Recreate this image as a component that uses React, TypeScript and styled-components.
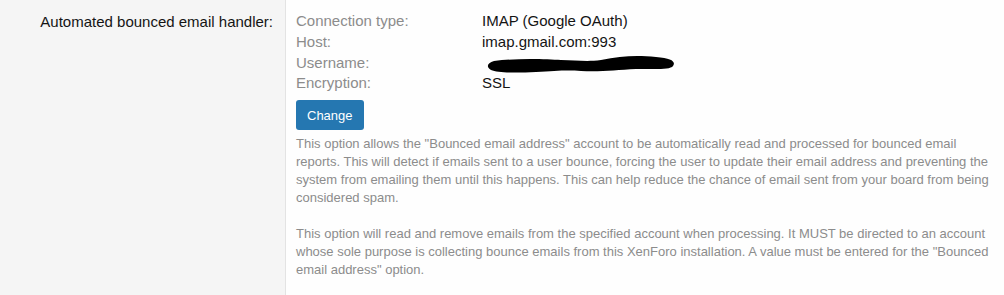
import React from "react";
import styled, { createGlobalStyle } from "styled-components";

const GlobalStyle = createGlobalStyle`
  html, body {
    margin: 0;
    padding: 0;
    background: #fefefe;
  }
  body {
    font-family: "Liberation Sans", Arial, sans-serif;
  }
`;

const details = [
  { label: "Connection type:", value: "IMAP (Google OAuth)" },
  { label: "Host:", value: "imap.gmail.com:993" },
  { label: "Username:", value: "", redacted: true },
  { label: "Encryption:", value: "SSL" },
];

export default function App() {
  return (
    <>
      <GlobalStyle />
      <Row>
        <Term>Automated bounced email handler:</Term>
        <Definition>
          <DetailList>
            {details.map((d) => (
              <React.Fragment key={d.label}>
                <DetailLabel>{d.label}</DetailLabel>
                <DetailValue>
                  {d.redacted ? <Scribble /> : d.value}
                </DetailValue>
              </React.Fragment>
            ))}
          </DetailList>
          <Button>Change</Button>
          <Explain>
            This option allows the "Bounced email address" account to be
            automatically read and processed for bounced email reports. This
            will detect if emails sent to a user bounce, forcing the user to
            update their email address and preventing the system from emailing
            them until this happens. This can help reduce the chance of email
            sent from your board from being considered spam.
            <br />
            <br />
            This option will read and remove emails from the specified account
            when processing. It MUST be directed to an account whose sole
            purpose is collecting bounce emails from this XenForo installation.
            A value must be entered for the "Bounced email address" option.
          </Explain>
        </Definition>
      </Row>
    </>
  );
}

// hand-drawn black marker stroke hiding the username
function Scribble() {
  return (
    <ScribbleSvg viewBox="0 0 190 22" width="190" height="22">
      <path
        d="M8 7 C 30 4, 60 5, 75 6 C 90 6, 100 8, 115 6 C 135 2, 150 1, 170 3 C 186 4, 190 8, 187 12 C 184 16, 170 15, 150 15 C 130 16, 115 18, 95 17 C 80 16, 70 17, 50 18 C 30 19, 12 19, 5 16 C 0 13, 1 9, 8 7 Z"
        fill="#000"
      />
    </ScribbleSvg>
  );
}

const Row = styled.div`
  display: flex;
  min-height: 295px;
`;

const Term = styled.div`
  width: 286px;
  flex-shrink: 0;
  box-sizing: border-box;
  padding: 11px 12px 0 0;
  text-align: right;
  font-size: 15px;
  line-height: 21px;
  color: #141414;
  background: #f5f5f5;
  border-right: 1px solid #e3e3e3;
`;

const Definition = styled.div`
  flex: 1;
  padding: 11px 8px 12px 10px;
`;

const DetailList = styled.div`
  display: grid;
  grid-template-columns: 186px 1fr;
  font-size: 15px;
  line-height: 20.8px;
`;

const DetailLabel = styled.div`
  color: #8c8c8c;
`;

const DetailValue = styled.div`
  color: #141414;
  position: relative;
`;

const ScribbleSvg = styled.svg`
  position: absolute;
  left: 4px;
  top: 1px;
`;

const Button = styled.button`
  display: inline-block;
  margin-top: 6px;
  height: 30px;
  padding: 0 11px;
  border: none;
  border-radius: 3px;
  background: #2577b1;
  color: #fff;
  font-family: "Liberation Sans", Arial, sans-serif;
  font-size: 13px;
  cursor: pointer;
`;

const Explain = styled.div`
  margin-top: 5px;
  font-size: 13px;
  line-height: 18px;
  color: #8c8c8c;
`;
